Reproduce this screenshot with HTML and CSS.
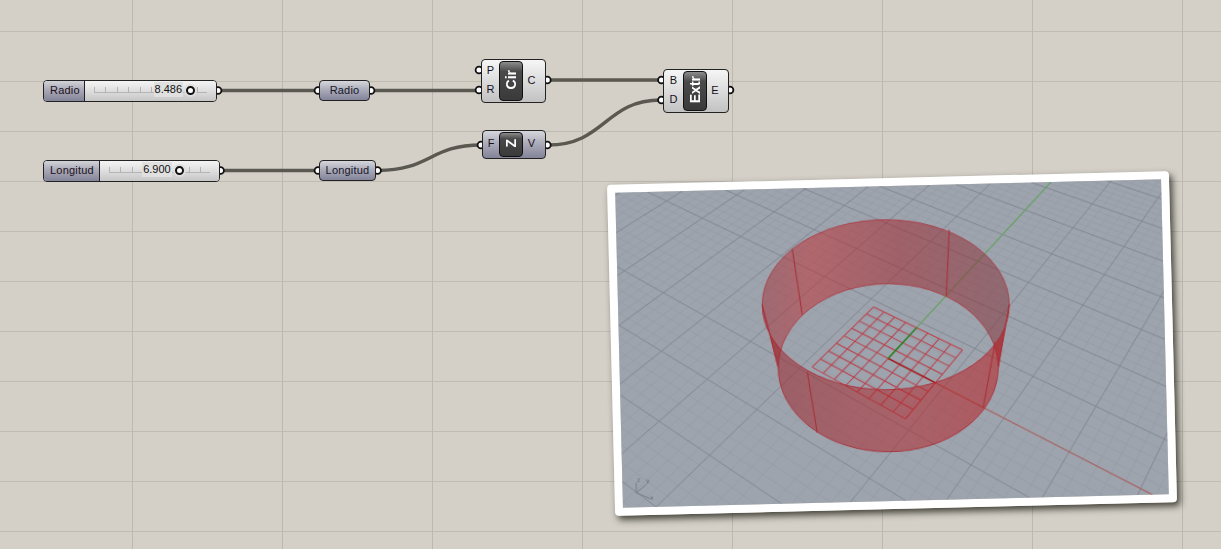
FILE: index.html
```html
<!DOCTYPE html>
<html lang="es">
<head>
    <meta charset="UTF-8">
    <title>Cilindro Grasshopper</title>
    <link rel="stylesheet" href="styles.css">
</head>
<body>

    <div id="canvas">

        <!-- wires and grips sit under the components -->
        <svg class="wires" width="1221" height="549">
            <path d="M218 90.5H318"/>
            <path d="M371 90.5H479"/>
            <path d="M221 170.5H318"/>
            <path d="M378 170.5C430 170.5 430 145 481 145"/>
            <path d="M548 80H661"/>
            <path d="M548 145C605 145 605 100 661 100"/>
            <g class="grips">
                <circle cx="218" cy="90.5" r="3.4"/>
                <circle cx="318" cy="90.5" r="3.4"/>
                <circle cx="371" cy="90.5" r="3.4"/>
                <circle cx="220.5" cy="170.5" r="3.4"/>
                <circle cx="318" cy="170.5" r="3.4"/>
                <circle cx="377.5" cy="170.5" r="3.4"/>
                <circle cx="479" cy="70" r="3.4"/>
                <circle cx="479" cy="90" r="3.4"/>
                <circle cx="547.3" cy="80" r="3.4"/>
                <circle cx="481" cy="145" r="3.4"/>
                <circle cx="547.3" cy="145" r="3.4"/>
                <circle cx="661.5" cy="80" r="3.4"/>
                <circle cx="661.5" cy="100" r="3.4"/>
                <circle cx="730" cy="90" r="3.4"/>
            </g>
        </svg>

        <div class="slider slider-radio">
            <div class="slider-name">Radio</div>
            <div class="slider-body">
                <div class="track">
                    <div class="thumb" style="left: 85%"><span class="value">8.486</span></div>
                </div>
            </div>
        </div>

        <div class="slider slider-longitud">
            <div class="slider-name">Longitud</div>
            <div class="slider-body">
                <div class="track">
                    <div class="thumb" style="left: 69%"><span class="value">6.900</span></div>
                </div>
            </div>
        </div>

        <div class="param param-radio">Radio</div>
        <div class="param param-longitud">Longitud</div>

        <div class="comp comp-cir">
            <div class="pins pins-in"><span>P</span><span>R</span></div>
            <div class="pill"><span>Cir</span></div>
            <div class="pins pins-out"><span>C</span></div>
        </div>

        <div class="comp comp-z">
            <div class="pins pins-in"><span>F</span></div>
            <div class="pill"><span>Z</span></div>
            <div class="pins pins-out"><span>V</span></div>
        </div>

        <div class="comp comp-extr">
            <div class="pins pins-in"><span>B</span><span>D</span></div>
            <div class="pill"><span>Extr</span></div>
            <div class="pins pins-out"><span>E</span></div>
        </div>

        <div class="photo">
            <svg class="view" width="545.5" height="315">
                <g transform="translate(272.75 157.5) rotate(1.41) translate(-891.5 -343.75)">
                    <defs>
                        <linearGradient id="backWall" gradientUnits="userSpaceOnUse" x1="762" y1="0" x2="1009" y2="0">
                            <stop offset="0" stop-color="#a03038"/>
                            <stop offset=".2" stop-color="#c32c2e"/>
                            <stop offset=".55" stop-color="#a32026"/>
                            <stop offset="1" stop-color="#813036"/>
                        </linearGradient>
                        <linearGradient id="frontWall" gradientUnits="userSpaceOnUse" x1="770" y1="0" x2="1005" y2="0">
                            <stop offset="0" stop-color="#9b1c22"/>
                            <stop offset=".55" stop-color="#b32226"/>
                            <stop offset="1" stop-color="#bd1012"/>
                        </linearGradient>
                    </defs>

                    <path id="minorGrid" class="grid-minor"/>
                    <path id="majorGrid" class="grid-major"/>

                    <path id="axisXFar" class="axis-x-far"/>
                    <path id="axisYFar" class="axis-y-far"/>
                    <path id="planeGrid" class="plane-grid"/>
                    <path id="axisXNear" class="axis-x-near"/>
                    <path id="axisYNear" class="axis-y-near"/>

                    <path class="wall-back" d="M762 305A123.5 85 0 0 1 1009 305L998 368A110 84 0 0 0 778 368Z"/>
                    <path class="wall-front" d="M762 305A123.5 85 0 0 0 1009 305L998 368A110 84 0 0 1 778 368Z"/>
                    <path class="seam" d="M792 249L802 315M949 230L946 296M807 372L817 433M995 342L983 408"/>

                    <g class="gizmo">
                        <path d="M636 493V483M636 493L646 485M636 493L650 499"/>
                        <text x="637" y="482">z</text>
                        <text x="646" y="483">y</text>
                        <text x="650" y="500">x</text>
                    </g>
                </g>
            </svg>
        </div>

    </div>

    <script src="viewport.js"></script>

</body>
</html>
```

FILE: styles.css
```css
html, body {
    margin: 0;
    padding: 0;
    overflow: hidden;
}
#canvas {
    position: relative;
    width: 1221px;
    height: 549px;
    overflow: hidden;
    font-family: "Liberation Sans", Arial, sans-serif;
    background-color: #d4d0c8;
    background-image:
        linear-gradient(to right, #bcb8af 1px, transparent 1px),
        linear-gradient(to bottom, #c0bcb3 1px, transparent 1px);
    background-size: 150px 100%, 100% 50px;
    background-position: 132px 0, 0 31px;
}

/* wires */
.wires {
    position: absolute;
    left: 0;
    top: 0;
}
.wires path {
    fill: none;
    stroke: #5a5850;
    stroke-width: 3.4;
}
.grips circle {
    fill: white;
    stroke: #111;
    stroke-width: 1.8;
}

/* number sliders */
.slider {
    position: absolute;
    display: flex;
    height: 20px;
    border: 1px solid #222;
    border-radius: 4px;
    overflow: hidden;
    font-size: 11px;
    letter-spacing: 0.2px;
}
.slider-radio {
    left: 43px;
    top: 80px;
    width: 172px;
}
.slider-longitud {
    left: 43px;
    top: 160px;
    width: 175px;
}
.slider-name {
    display: flex;
    align-items: center;
    padding: 0 6px 2px;
    color: #1c1020;
    border-right: 1px solid #222;
    background: linear-gradient(#d2d2d8, #a9a9b6 45%, #84849a);
}
.slider-radio .slider-name {
    width: 28px;
}
.slider-longitud .slider-name {
    width: 43px;
}
.slider-body {
    flex: 1;
    padding: 0 9px;
    background: linear-gradient(#f4f4f4, #dedede 50%, #c6c6c6);
}
.track {
    position: relative;
    height: 5px;
    margin-top: 6px;
    border-bottom: 1px solid #b4b4b4;
    background: repeating-linear-gradient(to right, #b4b4b4 0, #b4b4b4 1px, transparent 1px, transparent 11.4px);
}
.thumb {
    position: absolute;
    top: -1px;
    width: 5px;
    height: 5px;
    margin-left: -4px;
    background: white;
    border: 2px solid #111;
    border-radius: 50%;
    box-shadow: 0 0 0 2px #dedede;
}
.value {
    position: absolute;
    right: 10px;
    top: -6px;
    padding: 0 1px;
    line-height: 15px;
    letter-spacing: 0;
    color: #111;
    background: #e0e0e0;
}

/* parameters */
.param {
    position: absolute;
    box-sizing: border-box;
    height: 21px;
    padding-bottom: 2px;
    display: flex;
    align-items: center;
    justify-content: center;
    font-size: 11px;
    letter-spacing: 0.2px;
    color: #16162a;
    border: 1px solid #222;
    border-radius: 4px;
    background: linear-gradient(#d6d6dc, #a8a8b6 50%, #84849a);
}
.param-radio {
    left: 319px;
    top: 80px;
    width: 51px;
}
.param-longitud {
    left: 319px;
    top: 160px;
    width: 57px;
}

/* components */
.comp {
    position: absolute;
    box-sizing: border-box;
    display: flex;
    align-items: stretch;
    border: 1px solid #222;
    border-radius: 4px;
    padding: 1px 0;
    font-size: 11px;
    color: #161020;
    background: linear-gradient(#f6f6f6, #dcdcdc 50%, #c2c2c2);
}
.comp-cir {
    left: 481px;
    top: 59px;
    width: 65px;
    height: 44px;
}
.comp-extr {
    left: 663px;
    top: 69px;
    width: 66px;
    height: 44px;
}
.comp-z {
    left: 482px;
    top: 130px;
    width: 64px;
    height: 29px;
    background: linear-gradient(#d6d6dc, #a8a8b6 50%, #84849a);
}
.pins {
    display: flex;
    flex-direction: column;
    justify-content: space-around;
    align-items: center;
    padding-bottom: 3px;
}
.pins-in {
    width: 17px;
}
.comp-extr .pins-in {
    width: 19px;
}
.comp-z .pins-in {
    width: 16px;
}
.pins-out {
    flex: 1;
    padding-right: 5px;
}
.pill {
    width: 24px;
    display: flex;
    align-items: center;
    justify-content: center;
    padding-bottom: 3px;
    border-radius: 4px;
    border: 1px solid #111;
    box-sizing: border-box;
    color: white;
    font-size: 14px;
    font-weight: bold;
    background: linear-gradient(#8c8c8c, #4a4a4a 25%, #3a3a3a);
}
.pill span {
    writing-mode: vertical-rl;
    transform: rotate(180deg);
}

/* rhino viewport photo */
.photo {
    position: absolute;
    left: 610.75px;
    top: 178.25px;
    width: 561.5px;
    height: 331px;
    box-sizing: border-box;
    border: 8px solid white;
    border-radius: 4px;
    transform: rotate(-1.41deg);
    box-shadow: 3px 4px 7px rgba(30, 30, 20, 0.8);
}
.view {
    display: block;
    background: #9da4ae;
    filter: blur(0.45px);
}
.grid-minor, .grid-major, .plane-grid, .axis-x-far, .axis-y-far, .axis-x-near, .axis-y-near, .seam, .gizmo path {
    fill: none;
}
.grid-minor {
    stroke: #939aa4;
    stroke-width: 0.7;
}
.grid-major {
    stroke: #80848e;
    stroke-width: 0.9;
}
.axis-x-far {
    stroke: #a8605f;
    stroke-width: 1.2;
}
.axis-y-far {
    stroke: #64a060;
    stroke-width: 1.2;
}
.axis-x-near {
    stroke: #a01c20;
    stroke-width: 1.3;
}
.axis-y-near {
    stroke: #18881c;
    stroke-width: 1.4;
}
.plane-grid {
    stroke: #bc3e48;
    stroke-width: 1;
}
.wall-back {
    fill: url(#backWall);
    fill-opacity: 0.5;
    stroke: #aa3c46;
    stroke-width: 0.9;
}
.wall-front {
    fill: url(#frontWall);
    fill-opacity: 0.5;
    stroke: #aa2e38;
    stroke-width: 0.9;
}
.seam {
    stroke: #a8323a;
    stroke-width: 1.1;
}
.gizmo path {
    stroke: #747882;
    stroke-width: 0.9;
}
.gizmo text {
    font-size: 6px;
    fill: #5e626a;
}
```

FILE: viewport.js
```js
// perspective of the construction plane, from its two vanishing points
var origen = { x: 888, y: 358.7 };
var fugaX = { x: -484, y: -349, k: -0.00664 };
var fugaY = { x: 1541, y: -349, k: 0.00907 };

function proyectar(x, y) {
    var u = fugaX.k * x;
    var v = fugaY.k * y;
    var w = 1 + u + v;
    return {
        x: (origen.x + u * fugaX.x + v * fugaY.x) / w,
        y: (origen.y + u * fugaX.y + v * fugaY.y) / w
    };
}

function segmento(x1, y1, x2, y2) {
    var a = proyectar(x1, y1);
    var b = proyectar(x2, y2);
    return "M" + a.x.toFixed(1) + " " + a.y.toFixed(1) + "L" + b.x.toFixed(1) + " " + b.y.toFixed(1);
}

function gerarGrelha() {
    var paso = 5.85 / 5;
    var limite = 55;
    var menor = "";
    var maior = "";

    for (var i = -50; i <= 50; i++) {
        var p = i * paso;
        var linha = segmento(p, -limite, p, limite) + segmento(-limite, p, limite, p);
        if (i === 0) {
            continue;
        }
        if (i % 5 === 0) {
            maior += linha;
        } else {
            menor += linha;
        }
    }

    document.getElementById("minorGrid").setAttribute("d", menor);
    document.getElementById("majorGrid").setAttribute("d", maior);
}

function gerarPlano() {
    var d = "";
    for (var i = -4; i <= 4; i++) {
        var p = i * 1.25;
        d += segmento(p, -5, p, 5) + segmento(-5, p, 5, p);
    }
    document.getElementById("planeGrid").setAttribute("d", d);
}

gerarGrelha();
gerarPlano();

document.getElementById("axisXFar").setAttribute("d", segmento(0, 0, 55, 0));
document.getElementById("axisYFar").setAttribute("d", segmento(0, 0, 0, 55));
document.getElementById("axisXNear").setAttribute("d", segmento(0, 0, 5, 0));
document.getElementById("axisYNear").setAttribute("d", segmento(0, 0, 0, 5));
```
